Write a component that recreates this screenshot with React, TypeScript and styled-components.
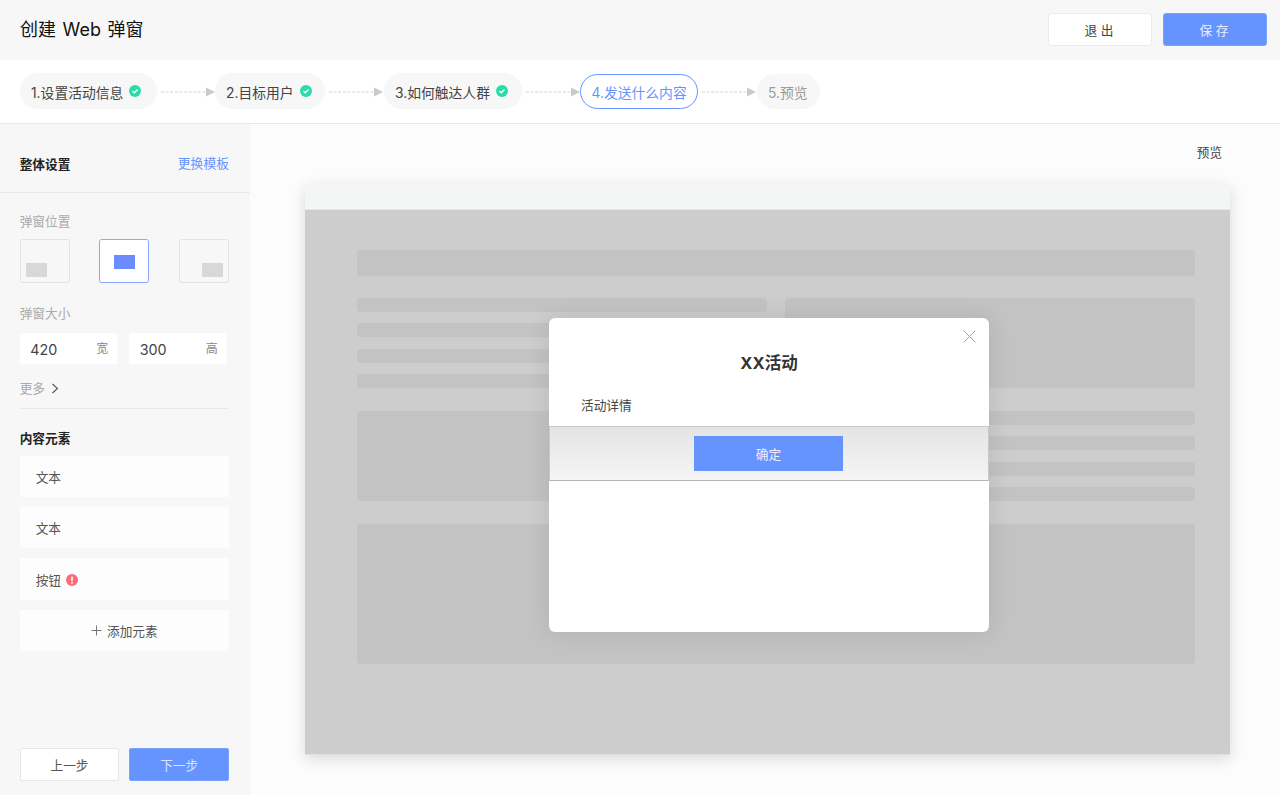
import React from "react";
import styled, { createGlobalStyle } from "styled-components";

const FONT = `Inter, "Noto Sans CJK SC", sans-serif`;
const Global = createGlobalStyle`
  html, body { margin: 0; padding: 0; height: 795px; overflow: hidden; }
  body { font-family: ${FONT}; background: #fff; color: #333; }
  * { box-sizing: border-box; }
`;
const BLUE = "#6694ff";

const Page = styled.div`width:1280px;height:795px;display:flex;flex-direction:column;overflow:hidden;`;
const Header = styled.header`height:60px;flex:none;background:#f7f7f7;display:flex;align-items:center;justify-content:space-between;padding:0 13px 0 20px;`;
const Title = styled.h1`margin:0;font-size:18px;font-weight:400;color:#111;line-height:60px;word-spacing:1.5px;`;
const Actions = styled.div`display:flex;gap:10.5px;margin-top:-2px;`;
const HeadButton = styled.button<{ $primary?: boolean }>`
  width:104.5px;height:33px;border-radius:3px;font:12.7px ${FONT};letter-spacing:3.5px;padding:0 0 0 2px;
  border:1px solid ${p => (p.$primary ? "#7aa2ff" : "#e8ecf2")};background:${p => (p.$primary ? BLUE : "#fff")};color:${p => (p.$primary ? "#e8eeff" : "#444")};
`;
const Stepper = styled.nav`height:64px;flex:none;background:#fff;border-bottom:1px solid #e8e8e8;display:flex;align-items:flex-start;padding:13px 0 0 20px;`;
const Step = styled.div<{ $state: "done" | "active" | "todo"; $w: number }>`
  width:${p => p.$w}px;height:${p => (p.$state === "done" ? 36 : 35)}px;margin-top:${p => (p.$state === "done" ? 0 : 1)}px;border-radius:18px;
  display:flex;align-items:center;justify-content:flex-start;gap:6px;padding:1px 0 0 ${p => (p.$state === "active" ? 10 : 11)}px;font-size:13.8px;white-space:nowrap;flex:none;
  background:${p => (p.$state === "active" ? "#fff" : "#f7f7f7")};
  border:${p => (p.$state === "active" ? `1px solid ${BLUE}` : "none")};
  color:${p => (p.$state === "active" ? BLUE : p.$state === "todo" ? "#999" : "#444")};
`;
const ArrowSvg = styled.svg`width:54px;height:12px;flex:none;margin:12.5px .5px 0 4px;`;
const Arrow = () => (
  <ArrowSvg viewBox="0 0 54 12">
    <line x1="0" y1="6" x2="45" y2="6" stroke="#d4d4d4" strokeWidth="1.2" strokeDasharray="3 1.6" />
    <polygon points="45,1.4 54,6 45,10.6" fill="#cacaca" />
  </ArrowSvg>
);
const CheckIcon = () => (
  <svg width="12" height="12" viewBox="0 0 12 12" style={{ flex: "none", marginTop: -2 }}>
    <circle cx="6" cy="6" r="6" fill="#2bdcaa" />
    <path d="M3.4 6.1 5.2 7.8 8.6 4.5" fill="none" stroke="#fff" strokeWidth="1.2" />
  </svg>
);
const Body = styled.div`flex:1;display:flex;min-height:0;`;
const Sidebar = styled.aside`width:250px;flex:none;background:#f7f7f7;display:flex;flex-direction:column;`;
const SideHead = styled.div`height:69px;flex:none;border-bottom:1px solid #e8e8e8;display:flex;align-items:center;justify-content:space-between;padding:10px 21px 0 19.7px;`;
const SectionTitle = styled.div`font-size:12.7px;font-weight:700;color:#222;`;
const LinkText = styled.a`font-size:12.8px;color:${BLUE};margin-top:-2px;`;
const Settings = styled.div`padding:20px 21px 0 19.7px;display:flex;flex-direction:column;`;
const Label = styled.div`font-size:12.7px;color:#aaa;line-height:18px;`;
const Positions = styled.div`display:flex;justify-content:space-between;margin:8.3px 0 22.2px;`;
const PositionBox = styled.div<{ $active?: boolean; $align: "left" | "center" | "right" }>`
  width:50.3px;height:44px;border-radius:2.5px;display:flex;padding:${p => (p.$align === "center" ? "15px 0 0" : "23px 5px 0")};
  justify-content:${p => (p.$align === "center" ? "center" : p.$align === "left" ? "flex-start" : "flex-end")};
  background:${p => (p.$active ? "#fff" : "#f7f7f7")};border:1px solid ${p => (p.$active ? "#8ba6ff" : "#e2e2e2")};
`;
const PositionFill = styled.div<{ $active?: boolean }>`width:21px;height:14px;background:${p => (p.$active ? "#6b8cff" : "#d8d8d8")};`;
const Sizes = styled.div`display:flex;gap:12px;margin-top:9.2px;`;
const SizeField = styled.div`width:97.5px;height:31.4px;background:#fff;border-radius:2px;display:flex;align-items:center;justify-content:space-between;padding:2px 9px 0 10.5px;`;
const SizeValue = styled.span`font-size:14.3px;color:#444;`;
const SizeUnit = styled.span`font-size:12px;color:#888;margin-top:-3px;`;
const More = styled.div`display:flex;align-items:center;gap:6px;margin-top:16px;font-size:12.7px;color:#aaa;line-height:17px;padding-bottom:11px;border-bottom:1px solid #e8e8e8;`;
const Elements = styled.div`padding:21px 21px 0 19.7px;display:flex;flex-direction:column;gap:10px;`;
const ElementsTitle = styled(SectionTitle)`line-height:18px;margin-bottom:-2px;`;
const ElementRow = styled.div<{ $center?: boolean }>`
  height:41.2px;background:#fdfdfd;display:flex;align-items:center;gap:5px;padding-left:${p => (p.$center ? 0 : 16)}px;font-size:12.7px;color:#555;
  justify-content:${p => (p.$center ? "center" : "flex-start")};
`;
const AlertIcon = () => (
  <svg width="12" height="12" viewBox="0 0 12 12" style={{ marginTop: 1 }}>
    <circle cx="6" cy="6" r="6" fill="#ff6b77" />
    <rect x="5.2" y="2.4" width="1.6" height="4.6" rx=".6" fill="#fff" />
    <circle cx="6" cy="8.8" r=".95" fill="#fff" />
  </svg>
);
const Footer = styled.div`margin-top:auto;padding:0 21px 13.7px 19.7px;display:flex;gap:10px;`;
const FootButton = styled.button<{ $primary?: boolean }>`
  flex:1;height:33px;border-radius:2px;font:12.7px ${FONT};padding:0;
  border:1px solid ${p => (p.$primary ? "#7aa2ff" : "#e6e6e6")};background:${p => (p.$primary ? BLUE : "#fff")};color:${p => (p.$primary ? "#d8e3ff" : "#555")};
`;
const Main = styled.main`flex:1;background:#fcfcfc;display:flex;flex-direction:column;padding:0 50px 0 55px;`;
const PreviewRow = styled.div`height:60px;flex:none;display:flex;justify-content:flex-end;padding:18px 8px 0 0;font-size:12.6px;color:#444;`;
const Frame = styled.div`width:925px;height:571px;display:flex;flex-direction:column;box-shadow:0 4px 14px rgba(0,0,0,.14);`;
const FrameBar = styled.div`height:26px;flex:none;background:#f4f5f5;border-bottom:1px solid #e6e6e6;`;
const Screen = styled.div`position:relative;flex:1;background:#cdcdcd;border-bottom:1px solid #e0e0e0;padding:39.5px 35px 0 52px;display:flex;flex-direction:column;`;
const Block = styled.div<{ $h: number }>`height:${p => p.$h}px;background:#c3c3c3;border-radius:4px;`;
const TwoCols = styled.div`display:grid;grid-template-columns:410px 410px;gap:18px;margin-top:22.4px;`;
const Lines = styled.div`height:90.6px;display:flex;flex-direction:column;justify-content:space-between;`;
const LastBlock = styled(Block)`margin-top:22.4px;`;
const Modal = styled.div`position:absolute;left:244px;top:108px;width:440px;height:314px;background:#fff;border-radius:6px;box-shadow:0 0 24px rgba(0,0,0,.1);overflow:hidden;display:flex;flex-direction:column;`;
const CloseIcon = styled.svg`position:absolute;right:13px;top:12px;width:13px;height:13px;`;
const ModalTitle = styled.div`text-align:center;font-size:16.5px;font-weight:700;color:#333;margin-top:35px;line-height:20px;`;
const ModalText = styled.div`font-size:12.7px;color:#444;margin:24px 0 0 32px;line-height:18px;`;
const ModalActions = styled.div`height:55px;margin-top:11px;flex:none;border:1px solid #c8c8c8;border-bottom-color:#b5b5b5;background:linear-gradient(#e4e4e4,#f5f5f5);display:flex;align-items:center;justify-content:center;padding-right:1px;`;
const Confirm = styled.button`width:149px;height:35px;background:${BLUE};border:0;color:#eef;font:12.7px ${FONT};padding:0;`;

const STEPS: { t: string; s: "done" | "active" | "todo"; w: number }[] = [
  { t: "1.设置活动信息", s: "done", w: 136.6 },
  { t: "2.目标用户", s: "done", w: 110.4 },
  { t: "3.如何触达人群", s: "done", w: 138 },
  { t: "4.发送什么内容", s: "active", w: 118 },
  { t: "5.预览", s: "todo", w: 63 },
];

export default function App() {
  return (
    <Page>
      <Global />
      <Header>
        <Title>创建 Web 弹窗</Title>
        <Actions>
          <HeadButton>退出</HeadButton>
          <HeadButton $primary>保存</HeadButton>
        </Actions>
      </Header>
      <Stepper>
        {STEPS.map((st, i) => (
          <React.Fragment key={st.t}>
            <Step $state={st.s} $w={st.w}>
              {st.t}
              {st.s === "done" && <CheckIcon />}
            </Step>
            {i < STEPS.length - 1 && <Arrow />}
          </React.Fragment>
        ))}
      </Stepper>
      <Body>
        <Sidebar>
          <SideHead>
            <SectionTitle>整体设置</SectionTitle>
            <LinkText>更换模板</LinkText>
          </SideHead>
          <Settings>
            <Label>弹窗位置</Label>
            <Positions>
              <PositionBox $align="left"><PositionFill /></PositionBox>
              <PositionBox $align="center" $active><PositionFill $active /></PositionBox>
              <PositionBox $align="right"><PositionFill /></PositionBox>
            </Positions>
            <Label>弹窗大小</Label>
            <Sizes>
              <SizeField><SizeValue>420</SizeValue><SizeUnit>宽</SizeUnit></SizeField>
              <SizeField><SizeValue>300</SizeValue><SizeUnit>高</SizeUnit></SizeField>
            </Sizes>
            <More>
              更多
              <svg width="8" height="11" viewBox="0 0 8 11"><path d="M1.5 1 6.5 5.5 1.5 10" fill="none" stroke="#555" strokeWidth="1.1" /></svg>
            </More>
          </Settings>
          <Elements>
            <ElementsTitle>内容元素</ElementsTitle>
            <ElementRow>文本</ElementRow>
            <ElementRow>文本</ElementRow>
            <ElementRow>按钮<AlertIcon /></ElementRow>
            <ElementRow $center>
              <svg width="11" height="11" viewBox="0 0 11 11"><path d="M5.5 .5v10M.5 5.5h10" stroke="#777" strokeWidth="1" fill="none" /></svg>
              添加元素
            </ElementRow>
          </Elements>
          <Footer>
            <FootButton>上一步</FootButton>
            <FootButton $primary>下一步</FootButton>
          </Footer>
        </Sidebar>
        <Main>
          <PreviewRow>预览</PreviewRow>
          <Frame>
            <FrameBar />
            <Screen>
              <Block $h={26} />
              <TwoCols>
                <Lines>
                  <Block $h={14} /><Block $h={14} /><Block $h={14} /><Block $h={14} />
                </Lines>
                <Block $h={90.6} />
              </TwoCols>
              <TwoCols>
                <Block $h={90.6} />
                <Lines>
                  <Block $h={14} /><Block $h={14} /><Block $h={14} /><Block $h={14} />
                </Lines>
              </TwoCols>
              <LastBlock $h={140} />
              <Modal>
                <CloseIcon viewBox="0 0 13 13"><path d="M.7.7l11.6 11.6M12.3.7.7 12.3" stroke="#a0a0a0" strokeWidth="1" fill="none" /></CloseIcon>
                <ModalTitle>XX活动</ModalTitle>
                <ModalText>活动详情</ModalText>
                <ModalActions><Confirm>确定</Confirm></ModalActions>
              </Modal>
            </Screen>
          </Frame>
        </Main>
      </Body>
    </Page>
  );
}
